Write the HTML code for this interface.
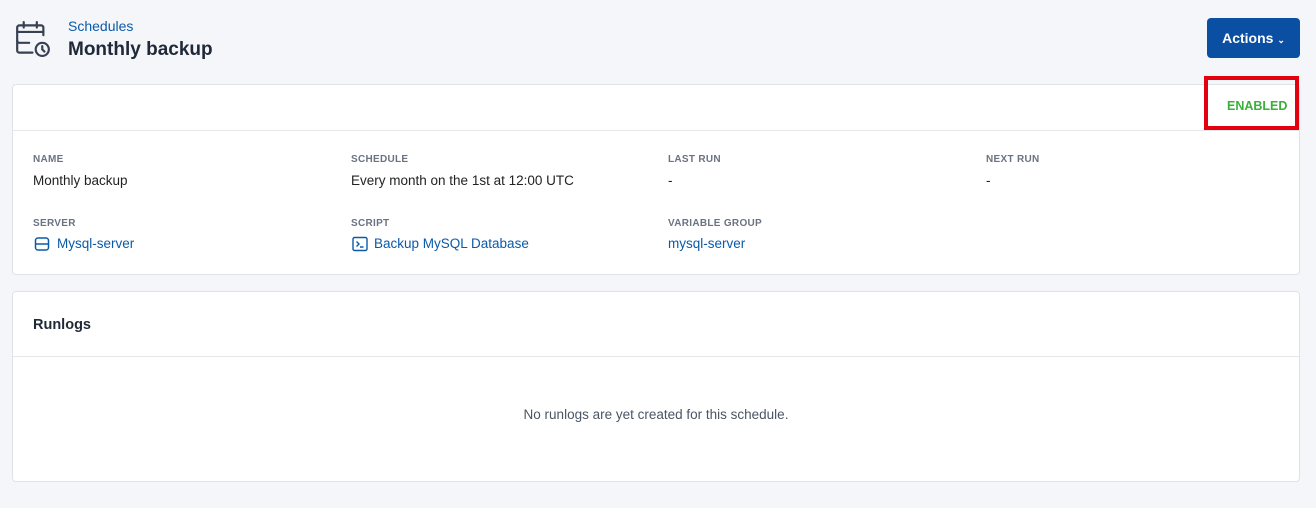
<!DOCTYPE html>
<html><head><meta charset="utf-8"><style>
*{box-sizing:border-box;margin:0;padding:0}
body{width:1316px;height:508px;background:#f5f6fa;font-family:"Liberation Sans",sans-serif;color:#1f2937;position:relative;overflow:hidden}
.abs{position:absolute}
.card{position:absolute;left:12px;width:1288px;background:#fff;border:1px solid #dfe2e7;border-radius:4px}
.lbl{position:absolute;font-size:10px;font-weight:bold;color:#6b7280;letter-spacing:.3px}
.val{position:absolute;font-size:13.5px;color:#222}
.lnk{position:absolute;font-size:13.5px;color:#0a5aa8}
</style></head><body>
<svg class="abs" style="left:15px;top:21px" width="36" height="36" viewBox="0 0 33 33" fill="none" stroke="#374151" stroke-width="2" stroke-linecap="round">
<path d="M13 20H4a2 2 0 0 1-2-2V6a2 2 0 0 1 2-2h20a2 2 0 0 1 2 2v7"/><path d="M2 10h24"/><path d="M8 1v5M20 1v5"/><circle cx="25" cy="26" r="6"/><path d="M25 23v3l2 2"/><path d="M2 18v9a2 2 0 0 0 2 2h12"/></svg>
<div class="abs" style="left:68px;top:18px;font-size:14px;color:#0a5aa8">Schedules</div>
<div class="abs" style="left:68px;top:39px;font-size:19px;font-weight:bold;color:#1f2937">Monthly backup</div>
<div class="abs" style="left:1207px;top:18px;width:93px;height:40px;background:#0b4fa3;border-radius:4px;color:#fff;font-weight:bold;font-size:14px;line-height:40px;text-align:center">Actions <span style="font-size:9px">&#8964;</span></div>
<div class="card" style="top:84px;height:191px">
<div class="abs" style="left:0;right:0;top:45px;border-top:1px solid #e5e7eb"></div>
<div class="lbl" style="left:20px;top:69px">NAME</div><div class="val" style="left:20px;top:88px">Monthly backup</div>
<div class="lbl" style="left:338px;top:69px">SCHEDULE</div><div class="val" style="left:338px;top:88px">Every month on the 1st at 12:00 UTC</div>
<div class="lbl" style="left:655px;top:69px">LAST RUN</div><div class="val" style="left:655px;top:88px">-</div>
<div class="lbl" style="left:973px;top:69px">NEXT RUN</div><div class="val" style="left:973px;top:88px">-</div>
<div class="lbl" style="left:20px;top:133px">SERVER</div>
<svg class="abs" style="left:21px;top:151px" width="16" height="16" viewBox="0 0 16 16" fill="none" stroke="#0a5aa8" stroke-width="1.5"><rect x="1.5" y="2" width="13" height="12" rx="2.5"/><path d="M1.5 8h13"/></svg>
<div class="lnk" style="left:44px;top:151px">Mysql-server</div>
<div class="lbl" style="left:338px;top:133px">SCRIPT</div>
<svg class="abs" style="left:339px;top:151px" width="16" height="16" viewBox="0 0 16 16" fill="none" stroke="#0a5aa8" stroke-width="1.4"><rect x="1" y="1.5" width="14" height="13" rx="1.5"/><path d="M4.5 5.5l2.5 2.5-2.5 2.5M8 11h3.5"/></svg>
<div class="lnk" style="left:361px;top:151px">Backup MySQL Database</div>
<div class="lbl" style="left:655px;top:133px">VARIABLE GROUP</div>
<div class="lnk" style="left:655px;top:151px">mysql-server</div>
</div>
<div class="abs" style="left:1204px;top:76px;width:95px;height:54px;border:4px solid #e3000f"></div>
<div class="abs" style="left:1227px;top:99px;font-size:12.5px;font-weight:bold;color:#3ab03a">ENABLED</div>
<div class="card" style="top:291px;height:191px">
<div class="abs" style="left:20px;top:25px;font-size:14.5px;font-weight:bold;color:#1f2937">Runlogs</div>
<div class="abs" style="left:0;right:0;top:64px;border-top:1px solid #e5e7eb"></div>
<div class="abs" style="left:0;right:0;top:115px;text-align:center;font-size:13.5px;color:#4b5563">No runlogs are yet created for this schedule.</div>
</div>
</body></html>
